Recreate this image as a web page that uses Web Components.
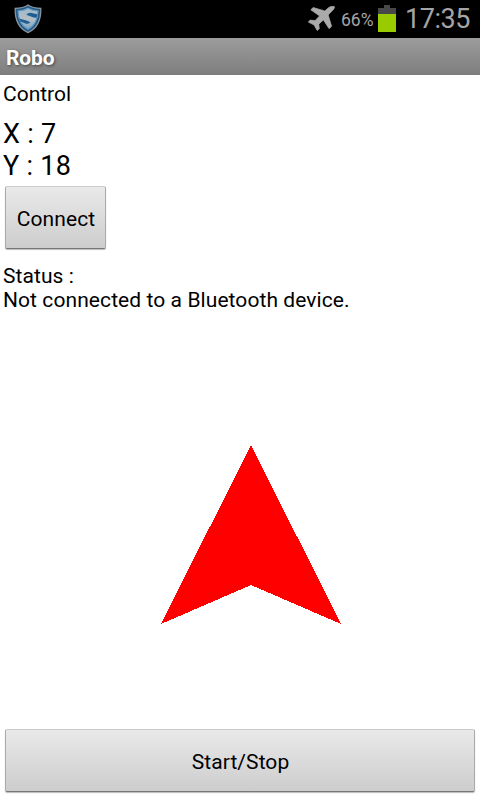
<!DOCTYPE html>
<html lang="en">
<head>
<meta charset="utf-8">
<title>Robo</title>
<style>
body { margin: 0; background: #fff; color: #000; font-family: Roboto, "Noto Sans", sans-serif; }
</style>
</head>
<body>
<robo-app></robo-app>
<script>
function define(name, html) {
  const template = document.createElement('template');
  template.innerHTML = html;
  customElements.define(name, class extends HTMLElement {
    constructor() {
      super();
      this.attachShadow({ mode: 'open' }).append(template.content.cloneNode(true));
    }
  });
}

define('shield-icon', `
<style>:host{display:block;width:28px;height:30px}svg{display:block}</style>
<svg width="28" height="30" viewBox="0 0 28 30">
  <defs><linearGradient id="b" x1="0" y1="0" x2="0" y2="1"><stop offset="0" stop-color="#6a9cc0"/><stop offset="1" stop-color="#4f8fc0"/></linearGradient>
  <linearGradient id="s" x1="0" y1="0" x2="0" y2="1"><stop offset="0" stop-color="#9fb9ca"/><stop offset=".5" stop-color="#b5bfc5"/><stop offset="1" stop-color="#7da5c2"/></linearGradient></defs>
  <path d="M14 1C10.500 3.300 6 4.300 1.200 4.300C.9 16 4.500 24.500 14 28.600C23.500 24.500 27.100 16 26.800 4.300C22 4.300 17.500 3.300 14 1Z" fill="#245a88" stroke="#8a959c" stroke-width="1.300"/>
  <path d="M14 4.300C11 6 7.500 6.800 4 7C4.200 16 7.500 22 14 25.600C20.500 22 23.800 16 24 7C20.500 6.800 17 6 14 4.300Z" fill="url(#s)" stroke="url(#b)" stroke-width="1.200"/>
  <path d="M23.300 10.200L16.500 8.800Q13.500 8.900 12.300 10.700L19.500 13.400L22.700 13.700Z" fill="#1f5e94"/>
  <path d="M5 14.400L12.500 16.500L16.300 18.200Q14.800 20.200 12 19.700L6.500 17.600Z" fill="#1f5e94"/>
</svg>`);

define('plane-icon', `
<style>:host{display:block;width:28px;height:26px}svg{display:block}</style>
<svg width="28" height="26" viewBox="0 0 28 26">
  <path d="M26.300.6C24.700-.4 21.700.6 19.800 2.300L16.900 5L5.200 1.500L2.800 3.800L11.500 9.900L7.200 14.600L2.200 14.100L.3 16.100L6 18.900L9.200 24.600L11.300 22.800L10.800 18.200L15.400 13.900L21.100 22.700L23.600 20.300L20.200 8.900L23.800 5.200C25.800 3.500 27 1.600 26.300.6Z" fill="#aaa" stroke="#aaa" stroke-width=".7" stroke-linejoin="round"/>
</svg>`);

define('battery-icon', `
<style>
:host{display:flex;flex-direction:column;align-items:center;width:18px;height:27px}
.cap{width:6px;height:3px;background:#484848}
.empty{width:18px;height:6px;background:#484848}
.full{width:18px;height:18px;background:#99cc00}
</style><div class="cap"></div><div class="empty"></div><div class="full"></div>`);

define('status-bar', `
<style>
:host{display:flex;align-items:flex-start;height:38px;background:#000;color:#a5a5a5;box-sizing:border-box;padding:0 9px 0 14px}
shield-icon{margin-top:4px}
plane-icon{margin:6px 5px 0 auto}
.pct{width:37px;font-size:17.500px;line-height:20px;margin-top:10px;white-space:nowrap}
battery-icon{margin-top:5px}
.time{width:66px;margin:3px 0 0 9px;font-size:27px;line-height:32px;white-space:nowrap;letter-spacing:-.45px}
</style>
<shield-icon></shield-icon><plane-icon></plane-icon><span class="pct">66%</span><battery-icon></battery-icon><span class="time">17:35</span>`);

define('title-bar', `
<style>
:host{display:flex;align-items:center;height:37px;box-sizing:border-box;padding:4px 6px 0;background:linear-gradient(#9c9c9c,#7e7e7e);color:#fff;font-size:21px;font-weight:700;line-height:25px;letter-spacing:-.1px;text-shadow:1px 1px 3px #444}
</style><slot></slot>`);

define('robo-button', `
<style>
:host{display:block}
button{display:block;width:100%;height:63px;margin:0;padding:3px 0 0 1px;border:1px solid;border-color:#cbcbcb #aaa #777 #aaa;border-radius:2px;background:linear-gradient(#e9e9e9,#cdcdcd);box-shadow:0 1px 1px #bbb;font:inherit;color:#000;font-size:21px;line-height:25px;letter-spacing:.08px}
</style><button><slot></slot></button>`);

define('text-label', `
<style>:host{display:block;font-size:21px;line-height:24px;letter-spacing:.08px;white-space:nowrap}:host([large]){font-size:27px;line-height:32px;letter-spacing:.3px}</style><slot></slot>`);

define('heading-arrow', `
<style>:host{display:block;width:180px;height:180px}svg{display:block}</style>
<svg width="180" height="180" viewBox="0 0 180 180" shape-rendering="crispEdges"><path d="M90 0L180 179L90 140L0 179Z" fill="#f00"/></svg>`);

define('robo-app', `
<style>
:host{display:flex;flex-direction:column;height:800px;overflow:hidden}
main{flex:1;display:flex;flex-direction:column;padding:7px 5px 8px;align-items:flex-start}
text-label{margin-left:-2px}
.control{margin-bottom:12px;letter-spacing:0}
.connect{width:101px;margin:4px 0 15px}
heading-arrow{margin:auto 0 104px 156px}
.start{width:470px}
</style>
<status-bar></status-bar>
<title-bar>Robo</title-bar>
<main>
<text-label class="control">Control</text-label>
<text-label large>X : 7</text-label>
<text-label large>Y : 18</text-label>
<robo-button class="connect">Connect</robo-button>
<text-label>Status :</text-label>
<text-label class="message">Not connected to a Bluetooth device.</text-label>
<heading-arrow></heading-arrow>
<robo-button class="start">Start/Stop</robo-button>
</main>`);
</script>
</body>
</html>
